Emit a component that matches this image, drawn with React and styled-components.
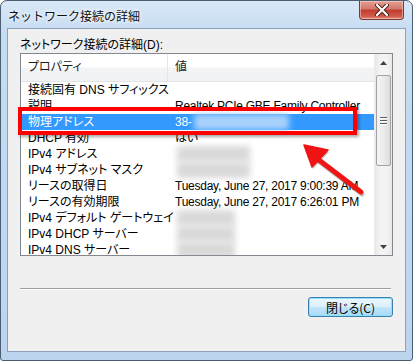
import React from "react";
import styled, { createGlobalStyle } from "styled-components";

const GlobalStyle = createGlobalStyle`
  html, body {
    margin: 0;
    padding: 0;
    background: #ffffff;
  }
  body {
    font-family: "Liberation Sans", "Noto Sans CJK JP", sans-serif;
    font-size: 12px;
    font-feature-settings: "palt";
    color: #000;
  }
`;

const rows = [
  { name: "接続固有 DNS サフィックス", value: "" },
  { name: "説明", value: "Realtek PCIe GBE Family Controller" },
  { name: "物理アドレス", value: "38-", blur: 95, selected: true },
  { name: "DHCP 有効", value: "はい" },
  { name: "IPv4 アドレス", value: "", blur: 73 },
  { name: "IPv4 サブネット マスク", value: "", blur: 73 },
  { name: "リースの取得日", value: "Tuesday, June 27, 2017 9:00:39 AM" },
  { name: "リースの有効期限", value: "Tuesday, June 27, 2017 6:26:01 PM" },
  { name: "IPv4 デフォルト ゲートウェイ", value: "", blur: 58 },
  { name: "IPv4 DHCP サーバー", value: "", blur: 58 },
  { name: "IPv4 DNS サーバー", value: "", blur: 58 },
];

const App = () => {
  return (
    <>
      <GlobalStyle />
      <Window>
        <TitleBar>
          <Title>ネットワーク接続の詳細</Title>
          <CloseButton>
            <svg width="14" height="12" viewBox="0 0 14 12">
              <path d="M2 1 L12 11 M12 1 L2 11" stroke="#4a1a16" strokeWidth="4" strokeLinecap="round" />
              <path d="M2 1 L12 11 M12 1 L2 11" stroke="#ffffff" strokeWidth="2.2" strokeLinecap="round" />
            </svg>
          </CloseButton>
        </TitleBar>
        <Client>
          <Label>ネットワーク接続の詳細(D):</Label>
          <ListBox>
            <ListMain>
              <Header>
                <HeaderCell $w={147}>プロパティ</HeaderCell>
                <HeaderCell>値</HeaderCell>
              </Header>
              <Body>
                {rows.map((r) => (
                  <Row key={r.name} $selected={r.selected}>
                    <NameCell>{r.name}</NameCell>
                    <ValueCell>
                      {r.value}
                      {r.blur && <Blur $w={r.blur} $light={r.selected} />}
                    </ValueCell>
                  </Row>
                ))}
              </Body>
            </ListMain>
            <ScrollBar>
              <ArrowBtn>
                <svg width="7" height="4" viewBox="0 0 7 4"><path d="M3.5 0 L7 4 L0 4 Z" fill="#404040" /></svg>
              </ArrowBtn>
              <Track>
                <Thumb>
                  <Grip />
                  <Grip />
                  <Grip />
                </Thumb>
              </Track>
              <ArrowBtn>
                <svg width="7" height="4" viewBox="0 0 7 4"><path d="M0 0 L7 0 L3.5 4 Z" fill="#404040" /></svg>
              </ArrowBtn>
            </ScrollBar>
            <Highlight />
          </ListBox>
          <Separator />
          <ButtonRow>
            <PushButton>閉じる(C)</PushButton>
          </ButtonRow>
          <Arrow width="70" height="60" viewBox="0 0 70 60">
            <g transform="translate(1,2)">
              <path d="M64 53 L18 18" stroke="rgba(0,0,0,0.25)" strokeWidth="5" strokeLinecap="round" />
              <path d="M7 6 L31 11 L15 28 Z" fill="rgba(0,0,0,0.25)" />
            </g>
            <path d="M64 53 L18 18" stroke="#f01414" strokeWidth="5" strokeLinecap="round" />
            <path d="M7 6 L31 11 L15 28 Z" fill="#f01414" stroke="#f01414" strokeWidth="1.5" strokeLinejoin="round" />
          </Arrow>
        </Client>
      </Window>
    </>
  );
};

const Window = styled.div`
  box-sizing: border-box;
  width: 413px;
  height: 361px;
  border: 1px solid #4b5d73;
  border-radius: 7px 7px 3px 3px;
  background: linear-gradient(180deg, #d9e8f7 0%, #c6dcf2 30px, #bcd4ee 100%);
  display: flex;
  flex-direction: column;
  overflow: hidden;
`;

const TitleBar = styled.div`
  height: 27px;
  display: flex;
  justify-content: space-between;
  align-items: flex-start;
  padding-left: 7px;
  padding-right: 7px;
`;

const Title = styled.div`
  font-family: "Noto Sans CJK JP", sans-serif;
  font-size: 12px;
  line-height: 14px;
  margin-top: 8px;
  color: #101010;
  font-feature-settings: normal;
  text-shadow: 0 0 6px #ffffff, 0 0 3px #ffffff;
`;

const CloseButton = styled.div`
  box-sizing: border-box;
  width: 45px;
  height: 19px;
  margin-right: 1px;
  border: 1px solid #7a3a33;
  border-top: none;
  border-radius: 0 0 4px 4px;
  background: linear-gradient(180deg, #e6a196 0%, #d2766a 45%, #c13b2c 50%, #cf5b4b 85%, #e08e80 100%);
  display: flex;
  align-items: center;
  justify-content: center;
  box-shadow: inset 0 0 0 1px rgba(255, 220, 210, 0.5);
`;

const Client = styled.div`
  position: relative;
  box-sizing: border-box;
  flex: 1;
  margin: 0 6px 8px 6px;
  border: 1px solid #8da2ba;
  background: #f0f0f0;
  padding: 8px 12px 0 12px;
  display: flex;
  flex-direction: column;
`;

const Label = styled.div`
  height: 16px;
  line-height: 16px;
`;

const ListBox = styled.div`
  position: relative;
  box-sizing: border-box;
  height: 203px;
  border: 1px solid #828790;
  background: #ffffff;
  display: flex;
`;

const ListMain = styled.div`
  flex: 1;
  display: flex;
  flex-direction: column;
  overflow: hidden;
`;

const Header = styled.div`
  box-sizing: border-box;
  height: 28px;
  display: flex;
  border-bottom: 1px solid #e2e3e5;
  background: linear-gradient(180deg, #ffffff 0%, #ffffff 48%, #f3f4f6 52%, #f1f2f4 100%);
`;

const HeaderCell = styled.div`
  box-sizing: border-box;
  width: ${(p) => (p.$w ? `${p.$w}px` : "auto")};
  flex: ${(p) => (p.$w ? "none" : "1")};
  padding-left: 7px;
  line-height: 27px;
  color: #1c1c1c;
  border-right: ${(p) => (p.$w ? "1px solid #e3e6ea" : "none")};
`;

const Body = styled.div`
  flex: 1;
  overflow: hidden;
`;

const Row = styled.div`
  height: 16px;
  line-height: 16px;
  display: flex;
  white-space: nowrap;
  background: ${(p) => (p.$selected ? "#3399ff" : "transparent")};
  color: ${(p) => (p.$selected ? "#ffffff" : "#000000")};
`;

const NameCell = styled.div`
  width: 154px;
  padding-left: 7px;
  box-sizing: border-box;
  flex: none;
  overflow: hidden;
`;

const ValueCell = styled.div`
  flex: 1;
  display: flex;
  align-items: center;
  letter-spacing: -0.25px;
`;

const Blur = styled.span`
  display: inline-block;
  width: ${(p) => p.$w}px;
  height: 16px;
  margin-left: 2px;
  background: ${(p) => (p.$light ? "#a9d2fb" : "#d9d9d9")};
  filter: blur(3px);
`;

const ScrollBar = styled.div`
  width: 17px;
  flex: none;
  display: flex;
  flex-direction: column;
  background: linear-gradient(90deg, #e8e8e8, #f3f3f3 30%, #f3f3f3 70%, #e8e8e8);
  border-left: 1px solid #ececec;
`;

const ArrowBtn = styled.div`
  height: 17px;
  display: flex;
  align-items: center;
  justify-content: center;
`;

const Track = styled.div`
  flex: 1;
  padding-top: 4px;
`;

const Thumb = styled.div`
  box-sizing: border-box;
  height: 91px;
  margin: 0 1px;
  border: 1px solid #a3a3a3;
  border-radius: 2px;
  background: linear-gradient(90deg, #f4f4f4 0%, #ececec 50%, #dcdcdc 100%);
  display: flex;
  flex-direction: column;
  justify-content: center;
  align-items: center;
  gap: 1px;
`;

const Grip = styled.div`
  width: 7px;
  height: 1px;
  background: #5a5a5a;
  border-bottom: 1px solid #ffffff;
`;

const Highlight = styled.div`
  position: absolute;
  left: -3px;
  top: 53px;
  width: 339px;
  height: 28px;
  box-sizing: border-box;
  border: 4px solid #ff0000;
  box-shadow: 2px 2px 3px rgba(0, 0, 0, 0.35);
  pointer-events: none;
`;

const Separator = styled.div`
  margin-top: 32px;
  margin-right: 2px;
  height: 1px;
  background: #a0a0a0;
  border-bottom: 1px solid #ffffff;
`;

const ButtonRow = styled.div`
  display: flex;
  justify-content: flex-end;
  margin-top: 7px;
`;

const PushButton = styled.div`
  box-sizing: border-box;
  width: 85px;
  height: 20px;
  border: 1px solid #3c7fb1;
  border-radius: 3px;
  background: linear-gradient(180deg, #edf7fd 0%, #dcf0fb 48%, #c0e6fb 52%, #a8d9f5 100%);
  box-shadow: inset 0 0 0 1px #8fe0fb;
  display: flex;
  align-items: center;
  justify-content: center;
  font-family: "Noto Sans CJK JP", sans-serif;
  font-size: 12px;
  color: #000;
`;

const Arrow = styled.svg`
  position: absolute;
  left: 289px;
  top: 110px;
  overflow: visible;
`;

export default App;
